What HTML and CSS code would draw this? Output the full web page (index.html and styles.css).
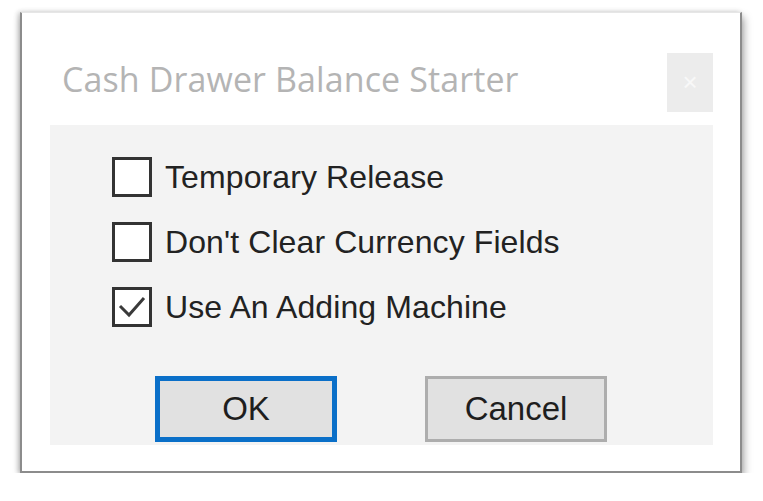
FILE: index.html
```html
<!DOCTYPE html>
<html lang="en">
<head>
  <meta charset="UTF-8" />
  <title>Cash Drawer Balance Starter</title>
  <link rel="stylesheet" href="styles.css">
</head>
<body>

  <div class="janela">
    <div class="barra">
      <span class="titulo">Cash Drawer Balance Starter</span>
      <button class="fechar">&times;</button>
    </div>

    <div class="painel">
      <label class="opcao">
        <span class="caixa"></span>
        Temporary Release
      </label>
      <label class="opcao">
        <span class="caixa"></span>
        Don't Clear Currency Fields
      </label>
      <label class="opcao">
        <span class="caixa">
          <svg viewBox="0 0 34 34" width="34" height="34"><polyline points="5,16 14,25 29,8" fill="none" stroke="#3a3a3a" stroke-width="3"/></svg>
        </span>
        Use An Adding Machine
      </label>

      <div class="botoes">
        <button class="botao ok">OK</button>
        <button class="botao">Cancel</button>
      </div>
    </div>
  </div>

</body>
</html>
```

FILE: styles.css
```css
body {
  margin: 0;
  background: #fff;
  font-family: "Liberation Sans", Arial, sans-serif;
}

.janela {
  margin: 12px 0 0 20px;
  width: 722px;
  height: 461px;
  background: #fff;
  border: 2px solid #8c8c8c;
  border-top: 1px solid #e6e6e6;
  box-shadow: 2px 5px 8px rgba(0,0,0,0.35), -2px 0 5px rgba(0,0,0,0.2);
  padding: 0 27px 0 28px;
  box-sizing: border-box;
}

.barra {
  height: 112px;
  display: flex;
  justify-content: space-between;
  align-items: flex-start;
}

.titulo {
  margin: 44px 0 0 12px;
  font-family: "Open Sans", sans-serif;
  font-size: 34px;
  letter-spacing: 0.1px;
  color: #b4b4b4;
  line-height: 44px;
}

.fechar {
  margin-top: 40px;
  width: 46px;
  height: 59px;
  border: none;
  background: #ececec;
  color: #f8f8f8;
  font-size: 26px;
  padding: 0;
}

.painel {
  background: #f3f3f3;
  height: 320px;
  padding: 32px 0 0 62px;
  box-sizing: border-box;
  display: flex;
  flex-direction: column;
  gap: 25px;
}

.opcao {
  display: flex;
  align-items: center;
  gap: 13px;
  font-size: 32px;
  letter-spacing: 0.1px;
  color: #222;
  height: 40px;
}

.caixa {
  width: 40px;
  height: 40px;
  box-sizing: border-box;
  border: 3px solid #333;
  background: #fff;
  display: flex;
  align-items: center;
  justify-content: center;
}

.botoes {
  display: flex;
  gap: 88px;
  margin: 24px 0 0 43px;
}

.botao {
  width: 182px;
  height: 66px;
  background: #e1e1e1;
  border: 3px solid #adadad;
  font-family: "Liberation Sans", Arial, sans-serif;
  font-size: 33px;
  color: #1e1e1e;
}

.ok {
  border: 5px solid #0a6fc8;
}
```
